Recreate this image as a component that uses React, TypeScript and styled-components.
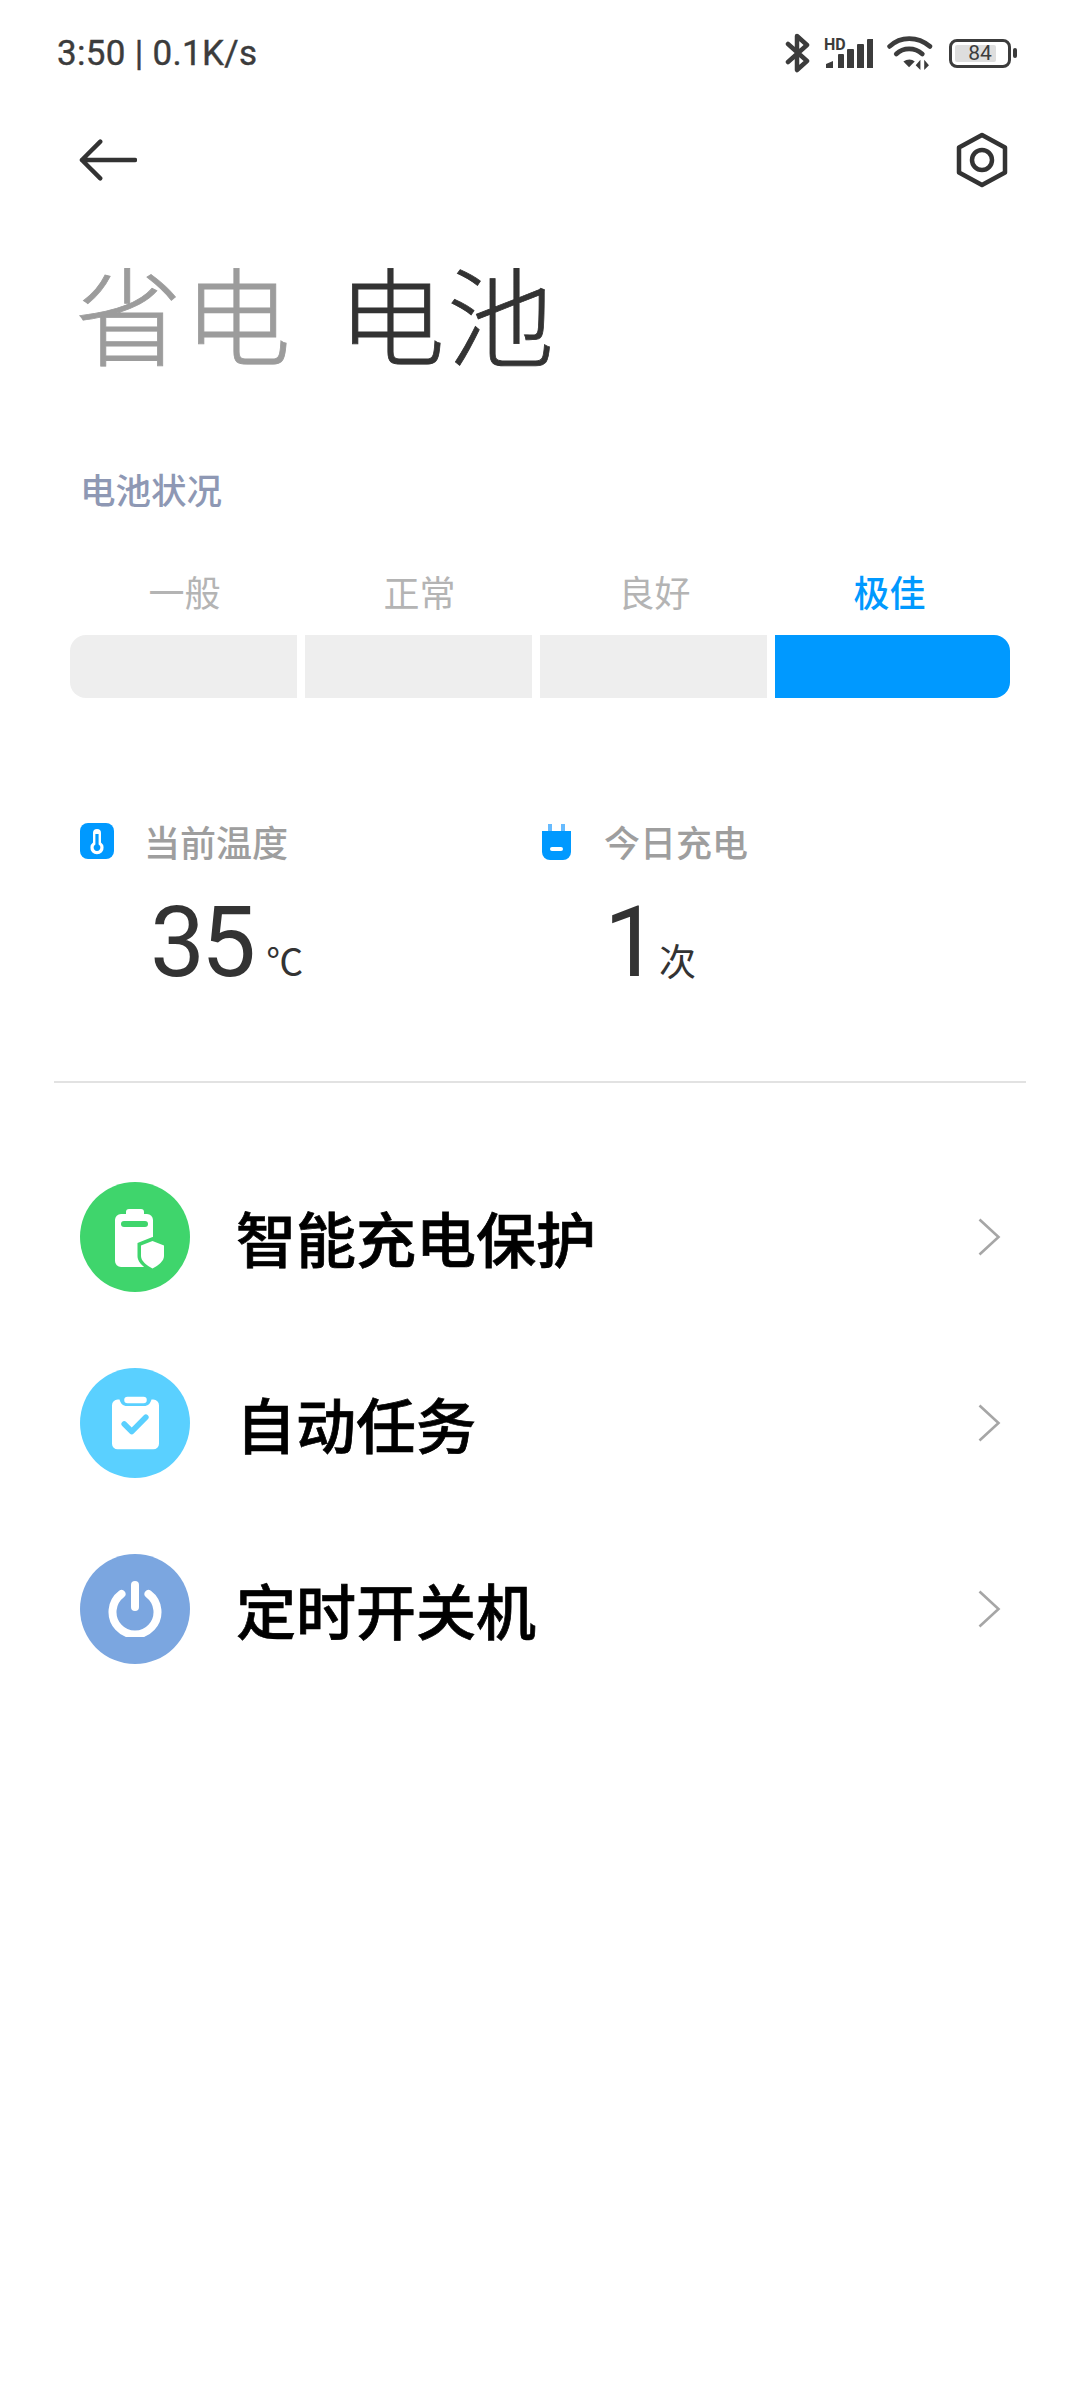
import React from 'react'
import styled, { createGlobalStyle } from 'styled-components'

const Global = createGlobalStyle`
  html, body {
    margin: 0;
    padding: 0;
    background: #fff;
    font-family: Roboto, "Noto Sans CJK SC", sans-serif;
  }
`

const Page = styled.div`
  width: 1080px;
  height: 2400px;
  background: #fff;
  overflow: hidden;
`

const StatusBar = styled.div`
  height: 106px;
  padding: 0 63px 0 57px;
  display: flex;
  align-items: center;
  justify-content: space-between;
  box-sizing: border-box;
`

const Clock = styled.div`
  font-size: 35px;
  font-weight: 400;
  font-family: Roboto, sans-serif;
  color: #3c3c3c;
  letter-spacing: 0.3px;
  -webkit-text-stroke: 0.4px #3c3c3c;
`

const StatusIcons = styled.div`
  display: flex;
  align-items: center;
  gap: 13px;
`

const SignalWrap = styled.div`
  position: relative;
  width: 50px;
  height: 32px;
`

const HdLabel = styled.span`
  position: absolute;
  left: 0;
  top: 0;
  font-size: 16px;
  line-height: 16px;
  font-weight: 700;
  font-family: Roboto, sans-serif;
  color: #3c3c3c;
`

const BatteryGroup = styled.div`
  display: flex;
  align-items: center;
  margin-left: 3px;
`

const NavBar = styled.div`
  height: 108px;
  padding: 0 72px 0 79px;
  display: flex;
  align-items: center;
  justify-content: space-between;
`

const Tabs = styled.div`
  margin-top: 36px;
  padding-left: 75px;
  display: flex;
  gap: 45px;
  height: 124px;
  align-items: center;
`

const TabGroup = styled.div<{ $active?: boolean }>`
  font-size: 107px;
  line-height: 124px;
  font-weight: 300;
  letter-spacing: 2px;
  font-family: "Noto Sans CJK SC", sans-serif;
  color: ${({ $active }) => ($active ? '#333333' : '#9c9c9c')};
  -webkit-text-stroke: 0.8px ${({ $active }) => ($active ? '#333333' : '#9c9c9c')};
`

const SectionLabel = styled.div`
  margin: 90px 0 0 80px;
  font-size: 35.500px;
  line-height: 50px;
  font-weight: 500;
  color: #8e98b4;
  font-family: "Noto Sans CJK SC", sans-serif;
`

const Levels = styled.div`
  margin: 52px 70px 0;
  display: grid;
  grid-template-columns: 227px 227px 227px 235px;
  column-gap: 8px;
`

const LevelName = styled.div<{ $active?: boolean }>`
  text-align: center;
  font-size: 36px;
  line-height: 50px;
  margin-bottom: 19px;
  padding-left: ${({ $active }) => ($active ? '0' : '2px')};
  padding-right: ${({ $active }) => ($active ? '6px' : '0')};
  font-weight: ${({ $active }) => ($active ? 500 : 400)};
  font-family: "Noto Sans CJK SC", sans-serif;
  color: ${({ $active }) => ($active ? '#0099ff' : '#b4b4b4')};
`

const LevelBar = styled.div<{ $active?: boolean; $first?: boolean; $last?: boolean }>`
  height: 63px;
  background: ${({ $active }) => ($active ? '#0099ff' : '#eeeeee')};
  border-radius: ${({ $first, $last }) => ($first ? '16px 0 0 16px' : $last ? '0 16px 16px 0' : '0')};
`

const Stats = styled.div`
  margin: 118px 54px 0 80px;
  padding-bottom: 86px;
  display: grid;
  grid-template-columns: 460px 1fr;
`

const Stat = styled.div``

const StatHead = styled.div`
  display: flex;
  align-items: center;
  height: 50px;
`

const StatIconSlot = styled.div`
  width: 64px;
  display: flex;
  align-items: center;
`

const StatLabel = styled.div`
  font-size: 36px;
  font-weight: 500;
  color: #9e9e9e;
  font-family: "Noto Sans CJK SC", sans-serif;
`

const StatValue = styled.div<{ $indent: number }>`
  margin-top: 25px;
  padding-left: ${({ $indent }) => $indent}px;
  display: flex;
  align-items: baseline;
  height: 104px;
`

const Number = styled.span`
  font-size: 98px;
  line-height: 104px;
  font-family: Roboto, sans-serif;
  font-weight: 400;
  color: #333;
  letter-spacing: -4px;
`

const Unit = styled.span<{ $gap: number }>`
  margin-left: ${({ $gap }) => $gap}px;
  font-size: 37px;
  color: #333;
  font-family: "Noto Sans CJK SC", sans-serif;
`

const Divider = styled.div`
  margin: 0 54px;
  height: 2px;
  background: #e2e2e2;
`

const Menu = styled.div`
  margin-top: 61px;
`

const Row = styled.div`
  height: 186px;
  padding: 0 79px 0 80px;
  display: flex;
  align-items: center;
`

const Circle = styled.div<{ $color: string }>`
  width: 110px;
  height: 110px;
  border-radius: 50%;
  background: ${({ $color }) => $color};
  display: flex;
  align-items: center;
  justify-content: center;
  flex: none;
`

const RowTitle = styled.div`
  flex: 1;
  margin-left: 46px;
  font-size: 60px;
  line-height: 80px;
  font-weight: 500;
  color: #000;
  font-family: "Noto Sans CJK SC", sans-serif;
  -webkit-text-stroke: 0.7px #000;
`

const Chevron = () => (
  <svg width="24" height="38" viewBox="0 0 24 38" fill="none">
    <path d="M2.5 1.5 21.5 19 2.500 36.500" stroke="#a6a6a6" strokeWidth="2.6" />
  </svg>
)

const Bluetooth = () => (
  <svg width="26" height="40" viewBox="0 0 26 40" fill="none">
    <path d="M3 11 22 28 12 37V3l10 9L3 29" stroke="#3c3c3c" strokeWidth="4.500" strokeLinejoin="round" strokeLinecap="round" />
  </svg>
)

const SignalBars = () => (
  <svg width="50" height="32" viewBox="0 0 50 32">
    <path d="M2 31v-4l7-3v7zM14 31V18a1 1 0 0 1 1-1h4a1 1 0 0 1 1 1v13zM23 31V13a1 1 0 0 1 1-1h5a1 1 0 0 1 1 1v18zM33 31V8a1 1 0 0 1 1-1h5a1 1 0 0 1 1 1v23zM43 31V3a1 1 0 0 1 1-1h5v29z" fill="#3c3c3c" />
  </svg>
)

const Wifi = () => (
  <svg width="46" height="36" viewBox="0 0 48 38" fill="none">
    <path d="M2.5 12C14 1 32 1 45 12" stroke="#3c3c3c" strokeWidth="5" strokeLinecap="round" />
    <path d="M9.5 20C17 13 29 13 37 20" stroke="#3c3c3c" strokeWidth="5" strokeLinecap="round" />
    <path d="M17 28c4-3 9-3 12 0l-6 6z" fill="#3c3c3c" />
    <path d="M35 26v11l-5-5zM39 26v11l5-5z" fill="#3c3c3c" />
  </svg>
)

const BatteryFrame = styled.div`
  position: relative;
  width: 62px;
  height: 29px;
  border: 3.5px solid #3c3c3c;
  border-radius: 8px;
  box-sizing: border-box;
`

const BatteryFill = styled.div`
  position: absolute;
  left: 3px;
  top: 3px;
  bottom: 3px;
  width: 41px;
  background: #dedede;
  border-radius: 2px;
`

const BatteryText = styled.div`
  position: absolute;
  inset: 0;
  text-align: center;
  font-size: 21px;
  line-height: 22px;
  color: #3c3c3c;
  font-family: Roboto, sans-serif;
`

const BatteryTip = styled.div`
  width: 4px;
  height: 10px;
  margin-left: 2px;
  background: #3c3c3c;
  border-radius: 2px;
`

const BackArrow = () => (
  <svg width="58" height="44" viewBox="0 0 60 44" fill="none">
    <path d="M22 3 3 22l19 19M3 22h55" stroke="#333" strokeWidth="4.500" strokeLinecap="round" strokeLinejoin="round" />
  </svg>
)

const Hexagon = () => (
  <svg width="52" height="56" viewBox="0 0 52 56" fill="none">
    <path d="M26 3 49 15.500v25L26 53 3 40.500v-25z" stroke="#333" strokeWidth="4.500" strokeLinejoin="round" />
    <circle cx="26" cy="28" r="10" stroke="#333" strokeWidth="4.500" />
  </svg>
)

const Thermo = () => (
  <svg width="34" height="36" viewBox="0 0 34 36">
    <rect width="34" height="36" rx="8" fill="#0099ff" />
    <path d="M17 6a4 4 0 0 1 4 4v9.500a6.600 6.600 0 1 1-8 0V10a4 4 0 0 1 4-4z" fill="#fff" />
    <path d="M15.400 11h3.200v10.500a3.400 3.400 0 1 1-3.200 0z" fill="#0099ff" />
  </svg>
)

const Plug = () => (
  <svg width="32" height="38" viewBox="-1 -2 32 38">
    <path d="M7 0h4v8H7zM20 0h4v8h-4z" fill="#66bbff" />
    <path d="M1 7h29v21a8 8 0 0 1-8 8H9a8 8 0 0 1-8-8z" fill="#0099ff" />
    <rect x="9" y="23" width="13" height="4" rx="2" fill="#fff" />
  </svg>
)

const BatteryShield = () => (
  <svg width="58" height="64" viewBox="-9 -4 58 64">
    <path d="M11 5V3a3 3 0 0 1 3-3h12a3 3 0 0 1 3 3v2h3a6 6 0 0 1 6 6v41a6 6 0 0 1-6 6H6a6 6 0 0 1-6-6V11a6 6 0 0 1 6-6z" fill="#fff" />
    <rect x="6" y="12" width="27" height="6" rx="3" fill="#3fd56c" />
    <path d="M37.500 28l15 6v13c0 7-7 12-15 16-8-4-15-9-15-16V34z" fill="#3fd56c" />
    <path d="M37.500 32l11.500 4.500V47c0 5-5.500 9.500-11.500 12.500-6-3-11.500-7.500-11.500-12.500V36.500z" fill="#fff" />
  </svg>
)

const Clipboard = () => (
  <svg width="47" height="54" viewBox="0 0 50 56">
    <path d="M6 3h2c1 4 3.500 7 8 7h18c4.500 0 7-3 8-7h2a6 6 0 0 1 6 6v41a6 6 0 0 1-6 6H6a6 6 0 0 1-6-6V9a6 6 0 0 1 6-6z" fill="#fff" />
    <rect x="13" y="0" width="24" height="7" rx="3.500" fill="#fff" />
    <path d="M13 29l8 8 15-15" fill="none" stroke="#5ad0ff" strokeWidth="6" strokeLinecap="round" strokeLinejoin="round" />
  </svg>
)

const Power = () => (
  <svg width="54" height="56" viewBox="0 0 54 56" fill="none" stroke="#fff" strokeWidth="8" strokeLinecap="round">
    <path d="M27 4v22" />
    <path d="M13.500 13a22.500 22.500 0 1 0 27 0" />
  </svg>
)

const LEVELS = ['一般', '正常', '良好', '极佳']

const MENU = [
  { title: '智能充电保护', color: '#3fd56c', icon: <BatteryShield /> },
  { title: '自动任务', color: '#5ad0ff', icon: <Clipboard /> },
  { title: '定时开关机', color: '#7ba6e0', icon: <Power /> },
]

export default function App() {
  return (
    <Page>
      <Global />
      <StatusBar>
        <Clock>3:50 | 0.1K/s</Clock>
        <StatusIcons>
          <Bluetooth />
          <SignalWrap>
            <HdLabel>HD</HdLabel>
            <SignalBars />
          </SignalWrap>
          <Wifi />
          <BatteryGroup>
            <BatteryFrame>
              <BatteryFill />
              <BatteryText>84</BatteryText>
            </BatteryFrame>
            <BatteryTip />
          </BatteryGroup>
        </StatusIcons>
      </StatusBar>
      <NavBar>
        <BackArrow />
        <Hexagon />
      </NavBar>
      <Tabs>
        <TabGroup>省电</TabGroup>
        <TabGroup $active>电池</TabGroup>
      </Tabs>
      <SectionLabel>电池状况</SectionLabel>
      <Levels>
        {LEVELS.map((name, i) => (
          <LevelName key={name} $active={i === 3}>{name}</LevelName>
        ))}
        {LEVELS.map((name, i) => (
          <LevelBar key={name} $active={i === 3} $first={i === 0} $last={i === 3} />
        ))}
      </Levels>
      <Stats>
        <Stat>
          <StatHead>
            <StatIconSlot><Thermo /></StatIconSlot>
            <StatLabel>当前温度</StatLabel>
          </StatHead>
          <StatValue $indent={70}>
            <Number>35</Number>
            <Unit $gap={14}>℃</Unit>
          </StatValue>
        </Stat>
        <Stat>
          <StatHead>
            <StatIconSlot><Plug /></StatIconSlot>
            <StatLabel>今日充电</StatLabel>
          </StatHead>
          <StatValue $indent={64}>
            <Number>1</Number>
            <Unit $gap={4}>次</Unit>
          </StatValue>
        </Stat>
      </Stats>
      <Divider />
      <Menu>
        {MENU.map((item) => (
          <Row key={item.title}>
            <Circle $color={item.color}>{item.icon}</Circle>
            <RowTitle>{item.title}</RowTitle>
            <Chevron />
          </Row>
        ))}
      </Menu>
    </Page>
  )
}
